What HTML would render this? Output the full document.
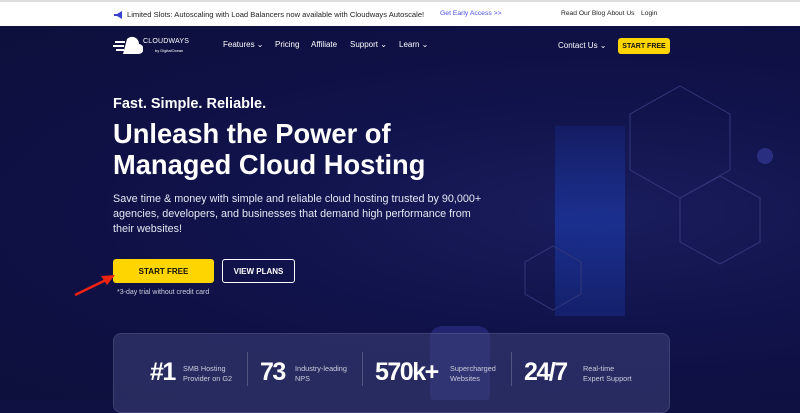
<!DOCTYPE html>
<html><head><style>
*{margin:0;padding:0;box-sizing:border-box}
body{width:800px;height:400px;overflow:hidden;background:#0f1142;font-family:"Liberation Sans",sans-serif;position:relative}
.top{position:absolute;top:0;left:0;width:800px;height:26px;background:#fff;border-top:2px solid #ddd;font-size:7.6px;color:#222}
.top span{position:absolute;top:8px;white-space:nowrap}
.bg{position:absolute;left:0;top:26px;width:800px;height:374px;background:radial-gradient(ellipse at 75% 50%,#1a1d5c 0%,#10124a 45%,#0d0f3c 100%)}
.nav{position:absolute;top:40px;font-size:8px;color:#fff;white-space:nowrap}
.h{position:absolute;left:113px;color:#fff;font-weight:bold;white-space:nowrap}
.btn{position:absolute;font-size:8px;font-weight:bold;display:flex;align-items:center;justify-content:center;border-radius:3px}
.stats{position:absolute;left:113px;top:333px;width:557px;height:80px;border-radius:8px;background:rgba(60,65,120,.55);border:1px solid rgba(255,255,255,.1)}
.n{position:absolute;top:358px;color:#fff;font-weight:bold;font-size:25px;letter-spacing:-1.5px;white-space:nowrap}
.l{position:absolute;top:364px;color:#ccd;font-size:7.3px;line-height:10px;white-space:nowrap}
.sep{position:absolute;top:352px;width:1px;height:34px;background:rgba(255,255,255,.2)}
</style></head><body>
<div class="top">
<svg style="position:absolute;left:113px;top:8px" width="11" height="10"><path d="M1 4h3l5-3v8l-5-3H1z" fill="#3b3fd0"/></svg>
<span style="left:127px;color:#222">Limited Slots: Autoscaling with Load Balancers now available with Cloudways Autoscale!</span>
<span style="left:440px;color:#4a4ee0;font-size:6.8px">Get Early Access &gt;&gt;</span>
<span style="left:561px;font-size:6.7px">Read Our Blog</span><span style="left:607px;font-size:6.7px">About Us</span><span style="left:641px;font-size:6.7px">Login</span>
</div>
<div class="bg">
<svg width="800" height="374" style="position:absolute;left:0;top:0">
<defs><linearGradient id="g" x1="0" y1="0" x2="0" y2="1"><stop offset="0" stop-color="#1a3bb0" stop-opacity=".2"/><stop offset=".5" stop-color="#1a3bb0" stop-opacity=".6"/><stop offset="1" stop-color="#1a3bb0" stop-opacity=".3"/></linearGradient></defs>
<rect x="555" y="100" width="70" height="190" fill="url(#g)"/>
<rect x="430" y="300" width="60" height="80" rx="12" fill="#3a3ea0" opacity=".45"/>
<g fill="none" stroke="#33377a" stroke-width="1"><path d="M680 60l50 28v56l-50 28-50-28V88z"/><path d="M553 220l28 16v32l-28 16-28-16v-32z"/><path d="M720 150l40 22v44l-40 22-40-22v-44z"/></g>
<circle cx="765" cy="130" r="8" fill="#2a2e80"/>
</svg>
</div>
<svg style="position:absolute;left:111px;top:36px" width="32" height="19"><path d="M16 3a7 7 0 0 1 12 5 5 5 0 0 1-1 10H12z" fill="#fff"/><g stroke="#fff" stroke-width="2"><path d="M4 6h10M2 10h11M5 14h8"/></g></svg>
<div class="nav" style="left:143px;top:38px;font-size:7px;letter-spacing:.2px">CLOUDWAYS</div>
<div class="nav" style="left:155px;top:48px;font-size:4px">by DigitalOcean</div>
<div class="nav" style="left:223px">Features ⌄</div><div class="nav" style="left:275px">Pricing</div><div class="nav" style="left:311px">Affiliate</div><div class="nav" style="left:350px">Support ⌄</div><div class="nav" style="left:399px">Learn ⌄</div>
<div class="nav" style="left:558px;top:41px">Contact Us ⌄</div>
<div class="btn" style="left:618px;top:38px;width:52px;height:16px;background:#ffd500;color:#111;font-size:7px">START FREE</div>
<div class="h" style="top:96px;font-size:14.5px">Fast. Simple. Reliable.</div>
<div class="h" style="top:118px;font-size:27.3px;line-height:31px">Unleash the Power of<br>Managed Cloud Hosting</div>
<div style="position:absolute;left:113px;top:192px;width:380px;color:#e6e8f5;font-size:10.8px;line-height:15px">Save time &amp; money with simple and reliable cloud hosting trusted by 90,000+ agencies, developers, and businesses that demand high performance from their websites!</div>
<div class="btn" style="left:113px;top:259px;width:101px;height:24px;background:#ffd500;color:#111">START FREE</div>
<div class="btn" style="left:222px;top:259px;width:73px;height:24px;border:1.5px solid #fff;color:#fff">VIEW PLANS</div>
<div style="position:absolute;left:117px;top:289px;color:#ccd;font-size:7px">*3-day trial without credit card</div>
<svg style="position:absolute;left:72px;top:272px" width="45" height="26"><path d="M3 23L38 6" stroke="#e21" stroke-width="2.5"/><path d="M43 3l-14 1 6 9z" fill="#e21"/></svg>
<div class="stats"></div>
<div class="n" style="left:150px">#1</div><div class="l" style="left:183px">SMB Hosting<br>Provider on G2</div>
<div class="sep" style="left:247px"></div>
<div class="n" style="left:260px">73</div><div class="l" style="left:295px">Industry-leading<br>NPS</div>
<div class="sep" style="left:362px"></div>
<div class="n" style="left:375px">570k+</div><div class="l" style="left:450px">Supercharged<br>Websites</div>
<div class="sep" style="left:511px"></div>
<div class="n" style="left:524px">24/7</div><div class="l" style="left:583px">Real-time<br>Expert Support</div>
</body></html>
